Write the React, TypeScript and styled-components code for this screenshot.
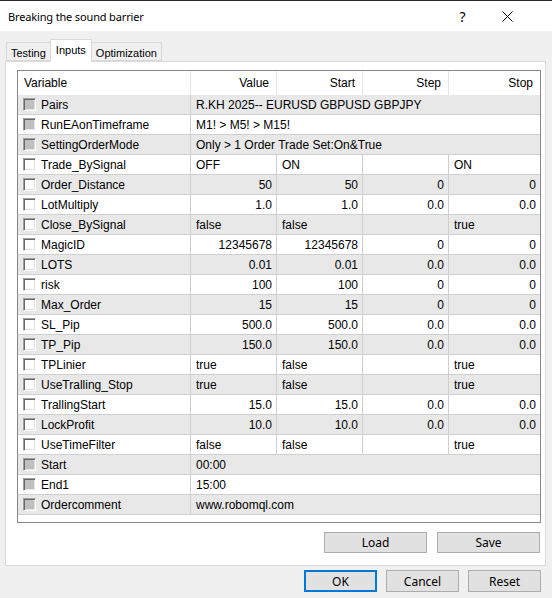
import React from 'react';
import styled, { createGlobalStyle } from 'styled-components';

const GlobalStyle = createGlobalStyle`
  html, body {
    margin: 0;
    padding: 0;
    background: #f0f0f0;
  }
  * {
    box-sizing: border-box;
  }
`;

const UI_FONT = `"Liberation Sans", Arial, sans-serif`;
const TITLE_FONT = `"Noto Sans", "Open Sans", sans-serif`;

const Window = styled.div`
  width: 552px;
  height: 598px;
  background: #f0f0f0;
  border-top: 1px solid #2b2b2b;
  display: flex;
  flex-direction: column;
  font-family: ${UI_FONT};
  font-size: 12px;
  color: #000;
  overflow: hidden;
`;

const TitleBar = styled.div`
  height: 30px;
  background: #fff;
  display: flex;
  align-items: center;
  padding: 0 22px 0 8px;
  font-family: ${TITLE_FONT};
  font-size: 11px;
`;

const TitleText = styled.div`
  flex: 1;
  letter-spacing: -0.15px;
`;

const TitleButton = styled.div`
  width: 45px;
  height: 30px;
  display: flex;
  align-items: center;
  justify-content: center;
  font-size: 14px;
`;

const Body = styled.div`
  flex: 1;
  display: flex;
  flex-direction: column;
  padding: 0 6px 0 5px;
`;

const TabStrip = styled.div`
  display: flex;
  align-items: flex-end;
  height: 30px;
  padding-left: 1px;
`;

const Tab = styled.div<{ $active?: boolean }>`
  height: ${(p) => (p.$active ? '23px' : '19px')};
  padding: ${(p) => (p.$active ? '3px 5px 0' : '3px 4px 0')};
  margin-bottom: ${(p) => (p.$active ? '-1px' : '0')};
  background: ${(p) => (p.$active ? '#fff' : '#f0f0f0')};
  border: 1px solid #d9d9d9;
  border-bottom: ${(p) => (p.$active ? 'none' : '1px solid #d9d9d9')};
  margin-left: ${(p) => (p.$active ? '-1px' : '0')};
  margin-right: ${(p) => (p.$active ? '-1px' : '0')};
  position: relative;
  z-index: ${(p) => (p.$active ? 1 : 0)};
  font-size: 11px;
  line-height: 14px;
`;

const Panel = styled.div`
  width: 541px;
  height: 505px;
  background: #fff;
  border: 1px solid #d9d9d9;
  padding: 8px 4px 0 11px;
  display: flex;
  flex-direction: column;
`;

const Grid = styled.div`
  width: 524px;
  height: 453px;
  border: 1px solid #828790;
  background: #fff;
`;

const COLS = '173px 86px 86px 86px 91px';

const HeaderRow = styled.div`
  display: grid;
  grid-template-columns: ${COLS};
  height: 24px;
`;

const HeaderCell = styled.div<{ $right?: boolean }>`
  display: flex;
  align-items: center;
  justify-content: ${(p) => (p.$right ? 'flex-end' : 'flex-start')};
  padding: 0 7px 0 6px;
  border-right: 1px solid #e5e5e5;
  &:last-child {
    border-right: none;
  }
`;

const Row = styled.div<{ $shade?: boolean }>`
  display: grid;
  grid-template-columns: ${COLS};
  height: 20px;
  background: ${(p) => (p.$shade ? '#e8e8e8' : '#fff')};
`;

const Cell = styled.div<{ $right?: boolean; $span?: boolean }>`
  display: flex;
  align-items: center;
  justify-content: ${(p) => (p.$right ? 'flex-end' : 'flex-start')};
  grid-column: ${(p) => (p.$span ? '2 / 6' : 'auto')};
  padding: ${(p) => (p.$right ? '0 4px 0 4px' : '0 4px 0 5px')};
  border-right: 1px solid #cfcfcf;
  border-bottom: 1px solid #cfcfcf;
  white-space: nowrap;
  overflow: hidden;
  &:last-child {
    border-right: none;
  }
`;

const VarCell = styled(Cell)`
  padding-left: 5px;
  gap: 5px;
`;

const Check = styled.span<{ $disabled?: boolean }>`
  width: 13px;
  height: 13px;
  flex: none;
  background: ${(p) => (p.$disabled ? '#c0c0c0' : '#fff')};
  border: 1px solid;
  border-color: #a0a0a0 #fff #fff #a0a0a0;
  box-shadow: inset 1px 1px 0 #696969, inset -1px -1px 0 #e3e3e3;
`;

const ButtonRow = styled.div<{ $bottom?: boolean }>`
  display: flex;
  justify-content: flex-end;
  gap: ${(p) => (p.$bottom ? '9px' : '10px')};
  padding: ${(p) => (p.$bottom ? '4px 5px 0 0' : '9px 1px 0 0')};
`;

const Button = styled.div<{ $wide?: boolean; $primary?: boolean }>`
  width: ${(p) => (p.$wide ? '103px' : '73px')};
  height: ${(p) => (p.$wide ? '21px' : '22px')};
  background: #e1e1e1;
  border: ${(p) => (p.$primary ? '2px solid #0078d7' : '1px solid #adadad')};
  display: flex;
  align-items: center;
  justify-content: center;
  font-family: ${TITLE_FONT};
  font-size: 12px;
`;

type Param = {
  name: string;
  value: string;
  start?: string;
  step?: string;
  stop?: string;
  fixed?: boolean;
  num?: boolean;
};

const params: Param[] = [
  { name: 'Pairs', value: 'R.KH 2025-- EURUSD GBPUSD GBPJPY', fixed: true },
  { name: 'RunEAonTimeframe', value: 'M1! > M5! > M15!', fixed: true },
  { name: 'SettingOrderMode', value: 'Only > 1 Order Trade Set:On&True', fixed: true },
  { name: 'Trade_BySignal', value: 'OFF', start: 'ON', step: '', stop: 'ON' },
  { name: 'Order_Distance', value: '50', start: '50', step: '0', stop: '0', num: true },
  { name: 'LotMultiply', value: '1.0', start: '1.0', step: '0.0', stop: '0.0', num: true },
  { name: 'Close_BySignal', value: 'false', start: 'false', step: '', stop: 'true' },
  { name: 'MagicID', value: '12345678', start: '12345678', step: '0', stop: '0', num: true },
  { name: 'LOTS', value: '0.01', start: '0.01', step: '0.0', stop: '0.0', num: true },
  { name: 'risk', value: '100', start: '100', step: '0', stop: '0', num: true },
  { name: 'Max_Order', value: '15', start: '15', step: '0', stop: '0', num: true },
  { name: 'SL_Pip', value: '500.0', start: '500.0', step: '0.0', stop: '0.0', num: true },
  { name: 'TP_Pip', value: '150.0', start: '150.0', step: '0.0', stop: '0.0', num: true },
  { name: 'TPLinier', value: 'true', start: 'false', step: '', stop: 'true' },
  { name: 'UseTralling_Stop', value: 'true', start: 'false', step: '', stop: 'true' },
  { name: 'TrallingStart', value: '15.0', start: '15.0', step: '0.0', stop: '0.0', num: true },
  { name: 'LockProfit', value: '10.0', start: '10.0', step: '0.0', stop: '0.0', num: true },
  { name: 'UseTimeFilter', value: 'false', start: 'false', step: '', stop: 'true' },
  { name: 'Start', value: '00:00', fixed: true },
  { name: 'End1', value: '15:00', fixed: true },
  { name: 'Ordercomment', value: 'www.robomql.com', fixed: true },
];

const CloseIcon = () => (
  <svg width="11" height="11" viewBox="0 0 11 11">
    <path d="M0.5 0.5 L10.5 10.5 M10.5 0.5 L0.5 10.5" stroke="#000" strokeWidth="1" fill="none" />
  </svg>
);

export default function App() {
  return (
    <>
      <GlobalStyle />
      <Window>
        <TitleBar>
          <TitleText>Breaking the sound barrier</TitleText>
          <TitleButton>?</TitleButton>
          <TitleButton>
            <CloseIcon />
          </TitleButton>
        </TitleBar>
        <Body>
          <TabStrip>
            <Tab>Testing</Tab>
            <Tab $active>Inputs</Tab>
            <Tab>Optimization</Tab>
          </TabStrip>
          <Panel>
            <Grid>
              <HeaderRow>
                <HeaderCell>Variable</HeaderCell>
                <HeaderCell $right>Value</HeaderCell>
                <HeaderCell $right>Start</HeaderCell>
                <HeaderCell $right>Step</HeaderCell>
                <HeaderCell $right>Stop</HeaderCell>
              </HeaderRow>
              {params.map((p, i) => (
                <Row key={p.name} $shade={i % 2 === 0}>
                  <VarCell>
                    <Check $disabled={p.fixed} />
                    {p.name}
                  </VarCell>
                  {p.fixed ? (
                    <Cell $span>{p.value}</Cell>
                  ) : (
                    <>
                      <Cell $right={p.num}>{p.value}</Cell>
                      <Cell $right={p.num}>{p.start}</Cell>
                      <Cell $right={p.num}>{p.step}</Cell>
                      <Cell $right={p.num}>{p.stop}</Cell>
                    </>
                  )}
                </Row>
              ))}
            </Grid>
            <ButtonRow>
              <Button $wide>Load</Button>
              <Button $wide>Save</Button>
            </ButtonRow>
          </Panel>
          <ButtonRow $bottom>
            <Button $primary>OK</Button>
            <Button>Cancel</Button>
            <Button>Reset</Button>
          </ButtonRow>
        </Body>
      </Window>
    </>
  );
}
